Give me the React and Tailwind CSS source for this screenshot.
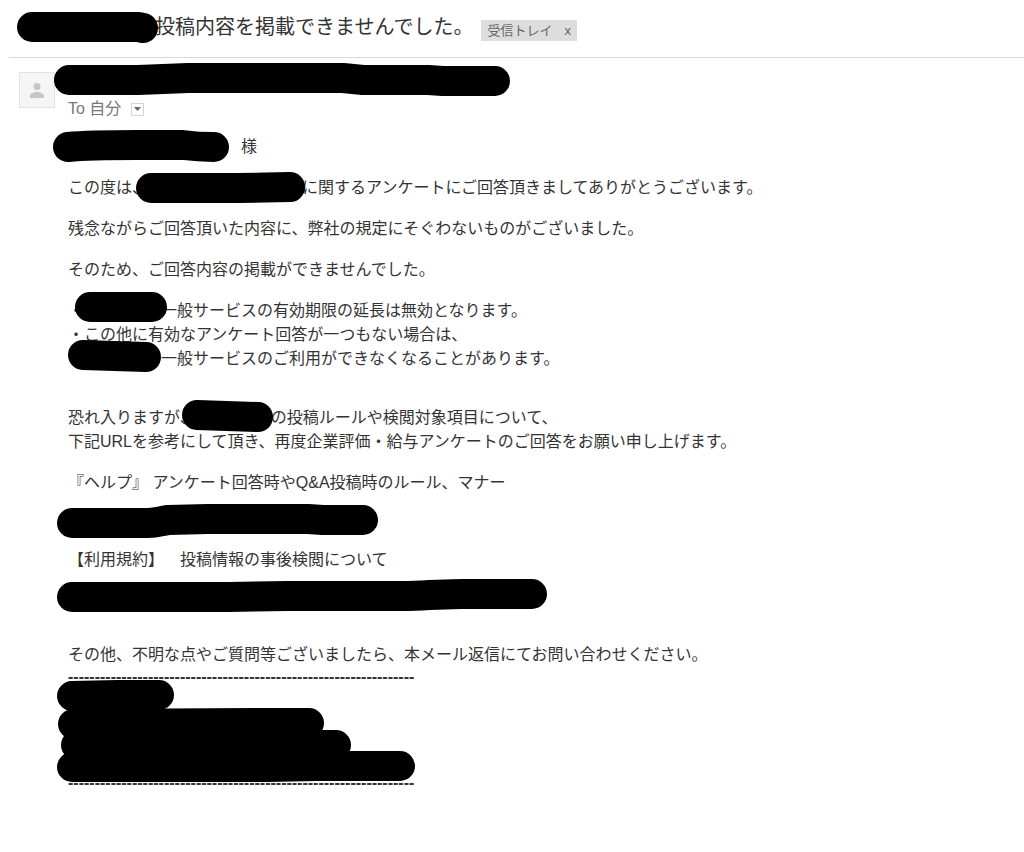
import React, { useState } from "react";

const DASHES = "-".repeat(65);

// marker stroke drawn over hidden text; the path starts from the text's own corner
function Redaction({ d, className = "w-full" }) {
  return (
    <span className={`relative inline-block h-6 shrink-0 align-top ${className}`}>
      <svg className="absolute left-0 top-0 overflow-visible" width="1" height="1" aria-hidden="true">
        <path d={d} fill="none" stroke="#000" strokeWidth="30" strokeLinecap="round" strokeLinejoin="round" />
      </svg>
    </span>
  );
}

function Avatar() {
  return (
    <div className="mt-1 flex size-9 shrink-0 items-center justify-center border border-[#e2e2e2] bg-[#f5f5f5]">
      <svg width="14" height="16" viewBox="0 0 14 16" fill="#c6c6c6" aria-hidden="true">
        <circle cx="7" cy="4.500" r="3.500" />
        <path d="M0 16v-2c0-2.600 4.400-4 7-4s7 1.400 7 4v2z" />
      </svg>
    </div>
  );
}

function SubjectBar() {
  const [inInbox, setInInbox] = useState(true);

  return (
    <header className="ml-[9px] flex items-end border-b border-[#d8d8d8] pt-[13px] pb-4 pl-2">
      <h1 className="flex text-[20px] leading-7 text-[#333]">
        <Redaction className="w-[138px]" d="M15 14H121L126 15" />
        投稿内容を掲載できませんでした。
      </h1>
      {inInbox && (
        <span className="ml-2 flex h-[21px] shrink-0 items-center gap-3 bg-[#ddd] px-[6px] text-[13px] leading-5 text-[#666]">
          受信トレイ
          <button type="button" aria-label="受信トレイから削除" onClick={() => setInInbox(false)}>
            x
          </button>
        </span>
      )}
    </header>
  );
}

function Recipient() {
  return (
    <div className="mt-[5px] flex h-6 items-center gap-[10px] text-[16px] text-[#777]">
      <span>To 自分</span>
      <button
        type="button"
        aria-label="詳細を表示"
        className="flex size-[13px] items-center justify-center border border-[#d4d4d4] bg-white"
      >
        <svg width="7" height="4" viewBox="0 0 7 4" fill="#666" aria-hidden="true">
          <path d="M0 0h7L3.500 4z" />
        </svg>
      </button>
    </div>
  );
}

function MessageBody() {
  return (
    <div className="mt-[14px] text-[16px] leading-6 text-[#333] [text-spacing-trim:space-all]">
      <p>
        <Redaction className="w-[173px]" d="M0 12Q20 10 70 10H115Q130 12 146 12" />様
      </p>
      <p className="mt-[17px]">
        この度は、
        <Redaction className="w-[154px]" d="M3 12H90L142 11" />
        に関するアンケートにご回答頂きましてありがとうございます。
      </p>
      <p className="mt-[17px]">残念ながらご回答頂いた内容に、弊社の規定にそぐわないものがございました。</p>
      <p className="mt-[17px]">そのため、ご回答内容の掲載ができませんでした。</p>
      <p className="mt-[17px]">
        ・
        <Redaction className="w-[77px]" d="M6 8H68" />
        一般サービスの有効期限の延長は無効となります。
        <br />
        ・この他に有効なアンケート回答が一つもない場合は、
        <br />
        <Redaction className="w-[93px]" d="M15 8L78 10" />
        一般サービスのご利用ができなくなることがあります。
      </p>
      <p className="mt-[35px]">
        恐れ入りますが、
        <Redaction className="w-[75px]" d="M1 9L62 11" />
        の投稿ルールや検閲対象項目について、
        <br />
        下記URLを参考にして頂き、再度企業評価・給与アンケートのご回答をお願い申し上げます。
      </p>
      <p className="mt-[17px]">『ヘルプ』 アンケート回答時やQ&amp;A投稿時のルール、マナー</p>
      <p className="mt-[15px]">
        <Redaction d="M4 13H80C90 13 92 11 100 10L140 9H240L255 10H295" />
      </p>
      <p className="mt-[14px]">【利用規約】　投稿情報の事後検閲について</p>
      <p className="mt-[14px]">
        <Redaction d="M4 11H160L220 10H340C370 9 380 8 395 8H464" />
      </p>
      <p className="mt-[33px]">
        その他、不明な点やご質問等ございましたら、本メール返信にてお問い合わせください。
      </p>
      <div className="whitespace-nowrap leading-5">
        <p className="font-bold">{DASHES}</p>
        <div className="flex h-[86px] flex-col pt-1">
          <Redaction d="M4 5L50 4H91" />
          <Redaction d="M5 9L200 8H241" />
          <Redaction d="M8 6H268" />
          <Redaction d="M4 4H200L250 3H332" />
        </div>
        <p className="font-bold">{DASHES}</p>
      </div>
    </div>
  );
}

export default function App() {
  return (
    <main
      lang="ja"
      className="min-h-screen bg-white pb-8 font-['Liberation_Sans','Noto_Sans_CJK_JP',sans-serif]"
    >
      <SubjectBar />
      <article className="flex gap-[13px] pt-[10px] pl-[19px]">
        <Avatar />
        <div className="min-w-0 flex-1">
          <Redaction d="M1 12H70L120 10H275L295 12H360L375 13H427" />
          <Recipient />
          <MessageBody />
        </div>
      </article>
    </main>
  );
}
